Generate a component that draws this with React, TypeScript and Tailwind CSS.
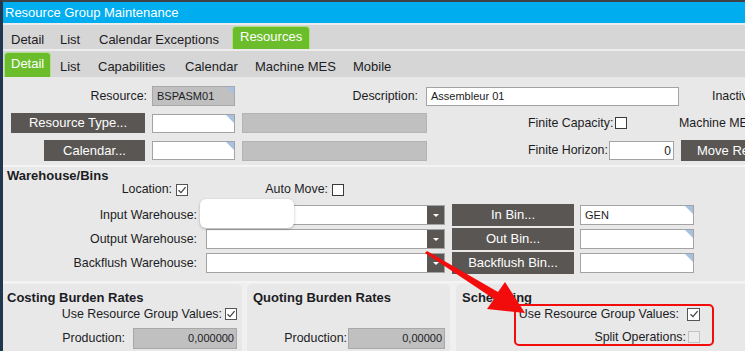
import type { ReactNode } from 'react';

const ink = 'text-[#1c1c24]';

function Corner() {
  return (
    <div className="absolute right-0 top-0 h-0 w-0 border-l-[8px] border-t-[8px] border-l-transparent border-t-[#a9c1e0]" />
  );
}

function Box({
  w,
  h = 'h-[19px]',
  gray,
  corner,
  right,
  className = '',
  children,
}: {
  w: string;
  h?: string;
  gray?: boolean;
  corner?: boolean;
  right?: boolean;
  className?: string;
  children?: ReactNode;
}) {
  return (
    <div
      className={`relative flex shrink-0 items-center overflow-hidden border text-[11px] ${w} ${h} ${
        gray ? 'border-[#a8a8a8] bg-[#c0c0c0]' : 'border-[#a3a3a3] bg-white'
      } ${right ? 'justify-end pr-[2px]' : 'pl-[4px]'} ${className}`}
    >
      <span className="whitespace-nowrap">{children}</span>
      {corner && <Corner />}
    </div>
  );
}

function Btn({ w, h = 'h-[20px]', className = '', children }: { w: string; h?: string; className?: string; children: ReactNode }) {
  return (
    <div
      className={`flex shrink-0 items-center justify-center whitespace-nowrap bg-[#595654] text-[13px] text-white ${w} ${h} ${className}`}
    >
      {children}
    </div>
  );
}

function Check({ on, off, className = '' }: { on?: boolean; off?: boolean; className?: string }) {
  return (
    <div
      className={`flex h-[12px] w-[12px] shrink-0 items-center justify-center border ${
        off ? 'border-[#c4c4c4] bg-[#ececec]' : 'border-[#3a3a3a] bg-white'
      } ${className}`}
    >
      {on && (
        <svg width="10" height="10" viewBox="0 0 10 10">
          <path d="M1.5 5.2 L4 7.6 L8.6 2.2" fill="none" stroke="#444" strokeWidth="1.3" />
        </svg>
      )}
    </div>
  );
}

function Combo({ className = '' }: { className?: string }) {
  return (
    <div className={`flex h-[20px] w-[239px] shrink-0 border border-[#a3a3a3] bg-white ${className}`}>
      <div className="grow" />
      <div className="flex w-[17px] items-center justify-center bg-[#595654]">
        <div className="h-0 w-0 border-l-[3px] border-r-[3px] border-t-[3px] border-l-transparent border-r-transparent border-t-white" />
      </div>
    </div>
  );
}

function Label({ w, className = '', children }: { w: string; className?: string; children: ReactNode }) {
  return <span className={`shrink-0 whitespace-nowrap text-right ${w} ${className}`}>{children}</span>;
}

export default function App() {
  return (
    <div
      className={`relative h-[351px] w-[745px] overflow-hidden border-l-[3px] border-t-2 border-l-[#22364f] border-t-[#3d4247] bg-[#f0f0f0] font-['Liberation_Sans',Arial,sans-serif] text-[12.4px] ${ink}`}
    >
      {/* title */}
      <div className="h-[21px] bg-[#00adef] pl-[2px] text-[13px] leading-[21px] text-white">Resource Group Maintenance</div>
      <div className="h-[2px] bg-[#ececec]" />

      {/* top tabs */}
      <div className="flex h-[24px] bg-[#d6d6d6] text-[13px]">
        <span className="ml-[8px] w-[49px] pt-[5px]">Detail</span>
        <span className="w-[39px] pt-[5px]">List</span>
        <span className="w-[133px] pt-[5px]">Calendar Exceptions</span>
        <div className="mt-[1px] flex h-[23px] items-center rounded-t-[4px] border border-b-0 border-[#b2df8c] bg-[#6bbd2c] px-[7px] pb-[2px] text-white">
          Resources
        </div>
      </div>
      <div className="h-[2px] bg-[#ececec]" />

      {/* sub tabs */}
      <div className="flex h-[26px] bg-[#d6d6d6] text-[13px]">
        <div className="ml-[1px] mt-[1px] flex h-[25px] w-[47px] items-center rounded-t-[4px] border border-b-0 border-[#b2df8c] bg-[#6bbd2c] pb-[3px] pl-[6px] text-white">
          Detail
        </div>
        <span className="ml-[9px] w-[38px] pt-[6px]">List</span>
        <span className="w-[87px] pt-[6px]">Capabilities</span>
        <span className="w-[70px] pt-[6px]">Calendar</span>
        <span className="w-[98px] pt-[6px]">Machine MES</span>
        <span className="pt-[6px]">Mobile</span>
      </div>

      {/* header form */}
      <div className="flex flex-col gap-[7px] bg-[#e8e8e8] pb-[4px] pt-[9px]">
        <div className="flex h-[20px] items-center">
          <Label w="w-[144px]">Resource:</Label>
          <Box w="w-[83px]" h="h-[20px]" gray corner className="ml-[5px]">
            BSPASM01
          </Box>
          <Label w="w-[183px]">Description:</Label>
          <Box w="w-[253px]" className="ml-[8px]">
            Assembleur 01
          </Box>
          <span className="ml-[33px] whitespace-nowrap">Inactive:</span>
        </div>
        <div className="flex h-[20px] items-center">
          <Btn w="w-[134px]" className="ml-[8px]">
            Resource Type...
          </Btn>
          <Box w="w-[83px]" corner className="ml-[7px]" />
          <Box w="w-[185px]" h="h-[20px]" gray className="ml-[7px] border-[#b4b4b4]" />
          <Label w="w-[84px]" className="ml-[101px]">
            Finite Capacity:
          </Label>
          <Check className="ml-[3px]" />
          <span className="ml-[52px] whitespace-nowrap">Machine MES:</span>
        </div>
        <div className="flex h-[21px] items-center">
          <Btn w="w-[101px]" h="h-[21px]" className="ml-[41px]">
            Calendar...
          </Btn>
          <Box w="w-[83px]" corner className="ml-[7px]" />
          <Box w="w-[185px]" h="h-[20px]" gray className="ml-[7px] border-[#b4b4b4]" />
          <Label w="w-[79px]" className="ml-[101px]">
            Finite Horizon:
          </Label>
          <Box w="w-[65px]" right className="ml-[2px] text-[12px]">
            0
          </Box>
          <Btn w="w-[130px]" h="h-[21px]" className="ml-[7px] !justify-start pl-[16px]">
            Move Resources...
          </Btn>
        </div>
      </div>
      <div className="h-[2px] bg-[#f4f4f4]" />

      {/* warehouse / bins */}
      <div className="flex flex-col bg-[#e8e8e8] pb-[7px] pt-[2px]">
        <div className="h-[14px] pl-[4px] text-[13px] font-bold leading-[13px]">Warehouse/Bins</div>
        <div className="flex h-[13px] items-center">
          <Label w="w-[169px]">Location:</Label>
          <Check on className="ml-[4px] border-[#555]" />
          <Label w="w-[140px]">Auto Move:</Label>
          <Check className="ml-[4px]" />
        </div>
        <div className="mt-[8px] flex flex-col gap-[2px]">
          {[
            ['Input Warehouse:', 'In Bin...', 'GEN'],
            ['Output Warehouse:', 'Out Bin...', ''],
            ['Backflush Warehouse:', 'Backflush Bin...', ''],
          ].map(([lab, btn, bin]) => (
            <div key={lab} className="flex h-[22px] items-center">
              <Label w="w-[194px]">{lab}</Label>
              <Combo className="ml-[9px]" />
              <Btn w="w-[122px]" h="h-[22px]" className="ml-[7px]">
                {btn}
              </Btn>
              <Box w="w-[114px]" h="h-[20px]" corner className="ml-[6px]">
                {bin}
              </Box>
            </div>
          ))}
        </div>
      </div>
      <div className="h-[2px] bg-[#f4f4f4]" />

      {/* burden rates / scheduling */}
      <div className="flex h-[70px] pt-[1px]">
        <div className="w-[239px] shrink-0 rounded-tr-[5px] bg-[#e8e8e8] pt-[6px]">
          <div className="h-[15px] pl-[4px] text-[13px] font-bold leading-[15px]">Costing Burden Rates</div>
          <div className="mt-[3px] flex h-[12px] items-center">
            <Label w="w-[219px]">Use Resource Group Values:</Label>
            <Check on className="ml-[3px] border-[#555]" />
          </div>
          <div className="mt-[8px] flex h-[21px] items-center">
            <Label w="w-[122px]">Production:</Label>
            <Box w="w-[104px]" h="h-[21px]" gray right className="ml-[8px]">
              0,000000
            </Box>
          </div>
        </div>
        <div className="ml-[5px] w-[203px] shrink-0 rounded-t-[5px] bg-[#e8e8e8] pt-[6px]">
          <div className="h-[15px] pl-[6px] text-[13px] font-bold leading-[15px]">Quoting Burden Rates</div>
          <div className="mt-[3px] h-[12px]" />
          <div className="mt-[8px] flex h-[21px] items-center">
            <Label w="w-[100px]">Production:</Label>
            <Box w="w-[97px]" h="h-[21px]" gray right className="ml-[1px]">
              0,00000
            </Box>
          </div>
        </div>
        <div className="ml-[6px] grow rounded-tl-[5px] bg-[#e8e8e8] pt-[6px]">
          <div className="h-[15px] pl-[6px] text-[13px] font-bold leading-[15px]">Scheduling</div>
          <div className="mt-[3px] flex h-[12px] items-center">
            <Label w="w-[223px]">Use Resource Group Values:</Label>
            <Check on className="ml-[8px] h-[13px] w-[13px] border-[#555]" />
          </div>
          <div className="mt-[11px] flex h-[12px] items-center">
            <Label w="w-[230px]">Split Operations:</Label>
            <Check off className="ml-[2px]" />
          </div>
        </div>
      </div>

      {/* tooltip left over the input warehouse field */}
      <div className="absolute left-[197px] top-[197px] h-[29px] w-[94px] rounded-[6px] bg-white shadow-[0_1px_3px_rgba(0,0,0,0.25)]" />

      {/* highlight box */}
      <div className="pointer-events-none absolute left-[511px] top-[302px] h-[42px] w-[200px] rounded-[5px] border-2 border-[#f20c0c]" />

      {/* arrow */}
      <svg className="pointer-events-none absolute left-[-3px] top-[-2px]" width="745" height="351" viewBox="0 0 745 351">
        <polygon
          points="427,251 498,292 505,282 525,313 487,309 494,299 425,253"
          fill="#f20c0c"
        />
      </svg>
    </div>
  );
}
